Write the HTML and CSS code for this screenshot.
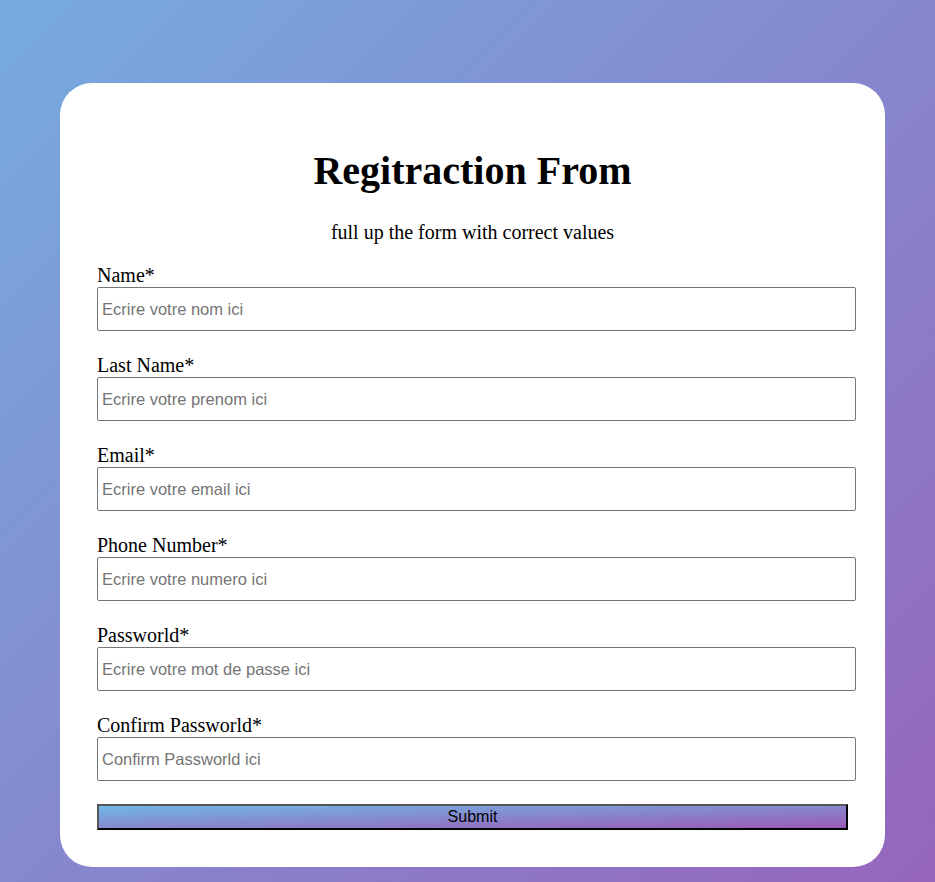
FILE: index.html
```html
<!DOCTYPE html>
<html lang="fr">
<head>
<meta charset="utf-8">
<title>Registration</title>
<link rel="stylesheet" href="styles.css">
</head>
<body>
<div class="card">
  <h1 class="title">Regitraction From</h1>
  <p class="subtitle">full up the form with correct values</p>
  <form class="form">
    <div class="field">
      <label class="label" for="name">Name*</label>
      <input class="input" id="name" type="text" placeholder="Ecrire votre nom ici">
    </div>
    <div class="field">
      <label class="label" for="last">Last Name*</label>
      <input class="input" id="last" type="text" placeholder="Ecrire votre prenom ici">
    </div>
    <div class="field">
      <label class="label" for="email">Email*</label>
      <input class="input" id="email" type="text" placeholder="Ecrire votre email ici">
    </div>
    <div class="field">
      <label class="label" for="phone">Phone Number*</label>
      <input class="input" id="phone" type="text" placeholder="Ecrire votre numero ici">
    </div>
    <div class="field">
      <label class="label" for="pw">Passworld*</label>
      <input class="input" id="pw" type="password" placeholder="Ecrire votre mot de passe ici">
    </div>
    <div class="field">
      <label class="label" for="pw2">Confirm Passworld*</label>
      <input class="input" id="pw2" type="password" placeholder="Confirm Passworld ici">
    </div>
    <button class="submit" type="button">Submit</button>
  </form>
</div>
</body>
</html>
```
FILE: styles.css
```css
html {
  min-height: 100%;
  background: linear-gradient(135deg, #76abe0, #9665bd);
}
body {
  margin: 0;
  padding: 83px 50px 15px 60px;
  font-family: "Liberation Serif", "Times New Roman", serif;
  color: #000;
}
.card {
  background: #fff;
  border-radius: 32px;
  padding: 37px;
}
.title {
  font-size: 40px;
  font-weight: bold;
  text-align: center;
  margin: 27px 0 27px;
}
.subtitle {
  font-size: 20px;
  text-align: center;
  margin: 0 0 20px;
}
.form {
  display: flex;
  flex-direction: column;
  gap: 23px;
}
.field {
  display: flex;
  flex-direction: column;
}
.label {
  font-size: 20px;
  line-height: 23px;
}
.input {
  box-sizing: border-box;
  width: calc(100% + 8px);
  height: 44px;
  margin: 0;
  padding: 0 4px;
  border: 1px solid #767676;
  border-radius: 2px;
  font-family: "Liberation Sans", Arial, sans-serif;
  font-size: 16.5px;
  background: #fff;
}
.input::placeholder {
  color: #757575;
}
.submit {
  height: 26px;
  padding: 0;
  border: 2px solid;
  border-color: #555 #000 #000 #555;
  background: linear-gradient(to bottom right, #71b7e6, #9b59b6);
  font-family: "Liberation Sans", Arial, sans-serif;
  font-size: 16px;
  color: #000;
}
```
